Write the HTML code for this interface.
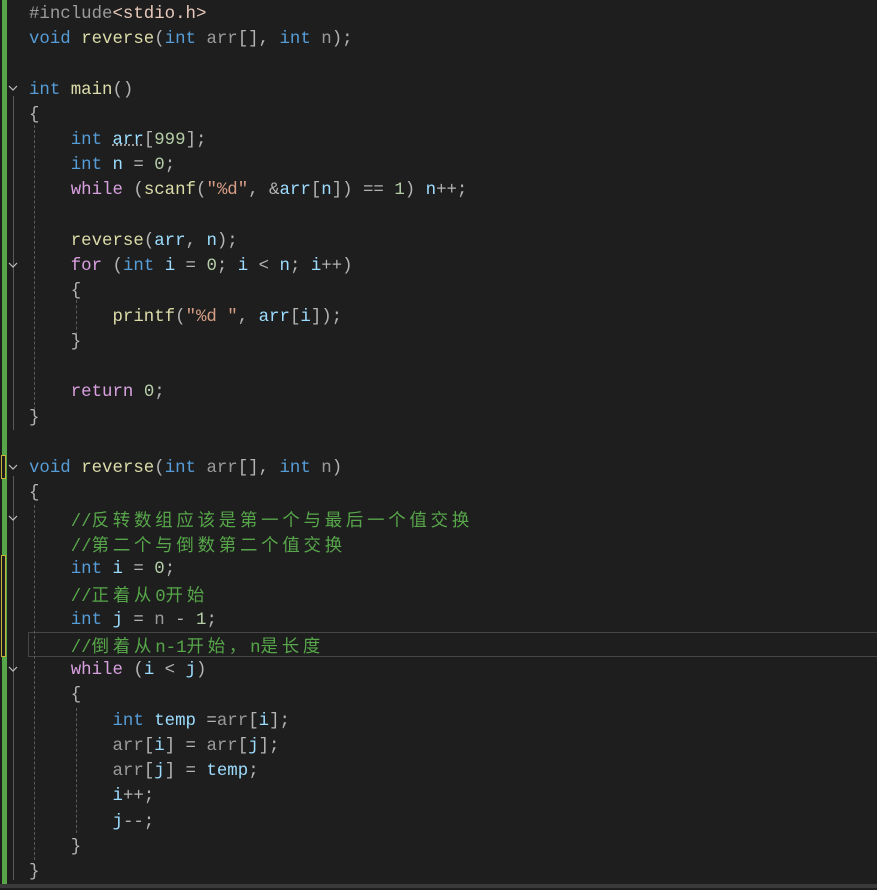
<!DOCTYPE html>
<html><head><meta charset="utf-8"><style>
body{margin:0;width:877px;height:888px;background:#1e1e1e;overflow:hidden;position:relative;font-family:"Liberation Mono","Noto Sans CJK SC",monospace;font-size:17.4px;}
.w{position:absolute;left:0;top:2px;width:877px;height:888px}
.l{position:absolute;left:29px;height:25px;line-height:25px;white-space:pre;color:#b4b4b4;}
.k{color:#569cd6}.f{color:#dcdcaa}.v{color:#9cdcfe}.p{color:#9a9a9a}.n{color:#b5cea8}.c{color:#57a64a}.s{color:#d69d85}.m{color:#d8a0df}.pp{color:#9b9b9b}.inc{color:#e8c9bb}
.cj{letter-spacing:3.8px;font-family:"Noto Sans CJK SC",sans-serif;}
.g{position:absolute;left:2px;width:5px;background:#57a64a}
.y{position:absolute;left:1px;width:3px;border:1px solid #c8b33a;background:#1e1e1e}
.gd{position:absolute;border-left:1px dashed #5a5a5a}
.fl{position:absolute;left:13px;border-left:1px solid #5a5a5a}
</style></head><body>
<div class="g" style="top:0;height:884px"></div>
<div class="y" style="top:455px;height:22px"></div>
<div class="y" style="top:555px;height:100px"></div>
<div style="position:absolute;left:0;top:884px;width:877px;height:4px;background:#3a3a3a"></div>
<div style="position:absolute;left:28px;top:632px;width:860px;height:23px;border:1px solid #464646"></div>
<div class="fl" style="top:96px;height:334px"></div>
<div class="fl" style="top:476px;height:404px"></div>
<div class="gd" style="left:34px;top:125px;height:285px"></div>
<div class="gd" style="left:76px;top:300px;height:35px"></div>
<div class="gd" style="left:34px;top:505px;height:355px"></div>
<div class="gd" style="left:76px;top:708px;height:125px"></div>
<svg style="position:absolute;left:0;top:0" width="30" height="888">
<g fill="none" stroke="#c0c0c0" stroke-width="1.2">
<path d="M9 86l4 4 4-4"/><path d="M9 263l4 4 4-4"/><path d="M9 465l4 4 4-4"/><path d="M9 516l4 4 4-4"/><path d="M9 667l4 4 4-4"/>
</g></svg>
<div class="w">
<div class="l" style="top:0px"><span class="pp">#include</span><span class="inc">&lt;stdio.h&gt;</span></div>
<div class="l" style="top:25px"><span class="k">void</span> <span class="f">reverse</span>(<span class="k">int</span> <span class="p">arr</span>[], <span class="k">int</span> <span class="p">n</span>);</div>
<div class="l" style="top:76px"><span class="k">int</span> <span class="f">main</span>()</div>
<div class="l" style="top:101px">{</div>
<div class="l" style="top:126px">    <span class="k">int</span> <span class="v" style="text-decoration:underline dotted #aaa">arr</span>[<span class="n">999</span>];</div>
<div class="l" style="top:151px">    <span class="k">int</span> <span class="v">n</span> = <span class="n">0</span>;</div>
<div class="l" style="top:176px">    <span class="m">while</span> (<span class="f">scanf</span>(<span class="s">"%d"</span>, &amp;<span class="v">arr</span>[<span class="v">n</span>]) == <span class="n">1</span>) <span class="v">n</span>++;</div>
<div class="l" style="top:227px">    <span class="f">reverse</span>(<span class="v">arr</span>, <span class="v">n</span>);</div>
<div class="l" style="top:252px">    <span class="m">for</span> (<span class="k">int</span> <span class="v">i</span> = <span class="n">0</span>; <span class="v">i</span> &lt; <span class="v">n</span>; <span class="v">i</span>++)</div>
<div class="l" style="top:277px">    {</div>
<div class="l" style="top:303px">        <span class="f">printf</span>(<span class="s">"%d "</span>, <span class="v">arr</span>[<span class="v">i</span>]);</div>
<div class="l" style="top:328px">    }</div>
<div class="l" style="top:378px">    <span class="m">return</span> <span class="n">0</span>;</div>
<div class="l" style="top:404px">}</div>
<div class="l" style="top:454px"><span class="k">void</span> <span class="f">reverse</span>(<span class="k">int</span> <span class="p">arr</span>[], <span class="k">int</span> <span class="p">n</span>)</div>
<div class="l" style="top:479px">{</div>
<div class="l" style="top:505px">    <span class="c">//<span class="cj">反转数组应该是第一个与最后一个值交换</span></span></div>
<div class="l" style="top:530px">    <span class="c">//<span class="cj">第二个与倒数第二个值交换</span></span></div>
<div class="l" style="top:555px">    <span class="k">int</span> <span class="v">i</span> = <span class="n">0</span>;</div>
<div class="l" style="top:580px">    <span class="c">//<span class="cj">正着从</span>0<span class="cj">开始</span></span></div>
<div class="l" style="top:606px">    <span class="k">int</span> <span class="v">j</span> = <span class="p">n</span> - <span class="n">1</span>;</div>
<div class="l" style="top:631px">    <span class="c">//<span class="cj">倒着从</span>n-1<span class="cj">开始，</span>n<span class="cj">是长度</span></span></div>
<div class="l" style="top:656px">    <span class="m">while</span> (<span class="v">i</span> &lt; <span class="v">j</span>)</div>
<div class="l" style="top:681px">    {</div>
<div class="l" style="top:707px">        <span class="k">int</span> <span class="v">temp</span> =<span class="p">arr</span>[<span class="v">i</span>];</div>
<div class="l" style="top:732px">        <span class="p">arr</span>[<span class="v">i</span>] = <span class="p">arr</span>[<span class="v">j</span>];</div>
<div class="l" style="top:757px">        <span class="p">arr</span>[<span class="v">j</span>] = <span class="v">temp</span>;</div>
<div class="l" style="top:782px">        <span class="v">i</span>++;</div>
<div class="l" style="top:808px">        <span class="v">j</span>--;</div>
<div class="l" style="top:833px">    }</div>
<div class="l" style="top:858px">}</div>
</div>
</body></html>
